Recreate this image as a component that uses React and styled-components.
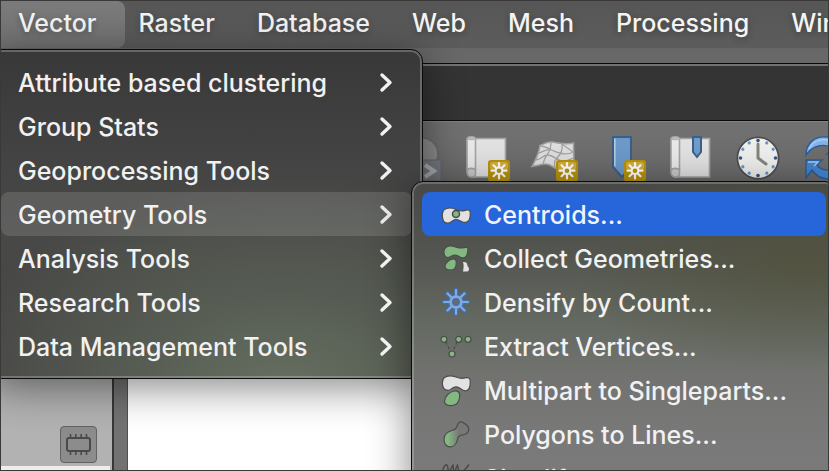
import React from "react";
import styled, { createGlobalStyle, css } from "styled-components";

const GlobalStyle = createGlobalStyle`
  *, *::before, *::after { box-sizing: border-box; }
  body { margin: 0; overflow: hidden; background: #5f5f5f; }
  body, button { font-family: Inter, "Liberation Sans", sans-serif; }
  button { border: 0; margin: 0; padding: 0; background: none; color: inherit; font-size: inherit; text-align: left; }
  ul { list-style: none; margin: 0; padding: 0; }
  svg { display: block; flex: none; overflow: visible; }
`;

const Screen = styled.div`
  position: relative;
  display: flex;
  flex-direction: column;
  height: 100vh;
  overflow: hidden;
  border: 1px solid #3a3838;
  background: linear-gradient(#606060, #696969 64px);
`;

const MenuBar = styled.nav`
  display: flex;
  flex: none;
  height: 47px;
  margin-left: -11px;
  background: linear-gradient(#565656, #5c5c5c);
  color: #f4f4f4;
  font-size: 25px;
`;

const MenuTitle = styled.button`
  flex: none;
  padding: 0 28px 4px;
  margin-right: -14px;
  font-weight: 500;
  white-space: nowrap;
  text-shadow: 0 2px 6px rgba(0, 0, 0, 0.3);
  ${(p) => p.$open && css`
    border-radius: 8px;
    background: linear-gradient(#7b7b7b, #727272);
  `}
`;

const AppWindow = styled.main`
  display: flex;
  flex: 1;
  flex-direction: column;
  margin-top: 15px;
  border-top: 1px solid #090909;
`;

const TitleBar = styled.header`
  height: 57px;
  border-top: 2px solid #737373;
  border-bottom: 1px solid #090909;
  background: #343434;
`;

const ToolBar = styled.div`
  display: flex;
  flex: none;
  gap: 24px;
  padding: 14px 0 20px 397px;
  border-top: 1px solid #828282;
  background: linear-gradient(#717171, #686868);
`;

const ToolButton = styled.button`
  flex: none;
  width: 44px;
  height: 44px;
`;

const Workspace = styled.div`
  display: flex;
  flex: 1;
`;

const SidePanel = styled.aside`
  display: flex;
  flex-direction: column;
  justify-content: flex-end;
  align-items: flex-end;
  width: 111px;
  background: #b2b2b2;
`;

const MemoryButton = styled.button`
  display: grid;
  place-items: center;
  width: 37px;
  height: 37px;
  margin: 0 15px 3px 0;
  border: 1px solid #626262;
  border-radius: 4px;
  background: #8c8c8c;
`;

const ListEdge = styled.div`
  align-self: stretch;
  height: 4px;
  margin-right: 2px;
  background: #eeeeee;
`;

const Splitter = styled.div`
  width: 16px;
  border-left: 2px solid #373737;
  border-right: 1px solid #505050;
  background: #727272;
`;

const Canvas = styled.section`
  flex: 1;
  background: #ffffff;
`;

const menuFrame = css`
  position: absolute;
  padding: 10px;
  border: 1px solid #0b0b0b;
  border-radius: 12px;
  color: #f1f1f1;
  font-size: 25px;
  font-weight: 500;
`;

const Menu = styled.ul`
  && {
    ${menuFrame}
    top: 48px;
    left: -11px;
    width: 433px;
    background:
      radial-gradient(ellipse 340px 220px at 295px 345px, #677061, rgba(92, 100, 88, 0.75) 45%, rgba(75, 75, 73, 0) 100%),
      linear-gradient(#383838, #444444 35%, #484846 60%, #464544);
    box-shadow: inset 0 0 0 2px rgba(255, 255, 255, 0.23), 0 8px 42px rgba(0, 0, 0, 0.48);
  }
`;

const SubMenu = styled.ul`
  && {
    ${menuFrame}
    top: -11px;
    left: calc(100% - 1px);
    width: 426px;
    background:
      radial-gradient(ellipse 240px 110px at 390px 80px, rgba(80, 80, 55, 0.65), rgba(80, 80, 55, 0)),
      linear-gradient(#484846, #535550 70px, #646961 140px, #727370 195px, #797979 260px, #7b7b7b);
    box-shadow: inset 0 0 0 2px rgba(255, 255, 255, 0.2), 0 8px 42px rgba(0, 0, 0, 0.48);
  }
`;

const MenuItem = styled.li`
  position: relative;
`;

const MenuRow = styled.button`
  display: flex;
  align-items: center;
  justify-content: space-between;
  width: 100%;
  height: 44px;
  padding: 0 20px 0 17px;
  border-radius: 8px;
  font-weight: inherit;
  white-space: nowrap;
  ${(p) => p.$open && css`background: rgba(255, 255, 255, 0.13);`}
`;

const ActionRow = styled(MenuRow)`
  justify-content: flex-start;
  gap: 12px;
  padding: 0 18px;
  ${(p) => p.$selected && css`background: #2765da; color: #f0f4ff;`}
`;

const RowLabel = styled.span`
  padding-top: 2px;
`;

const OUTLINE = "#4b4b4b";
const GREEN = "#83b981";

const Chevron = () => (
  <svg width="12" height="18" viewBox="0 0 12 18" fill="none" stroke="#f1f1f1" strokeWidth="3.4" strokeLinecap="round" strokeLinejoin="round">
    <path d="M2 2l8 7.500-8 7.500" />
  </svg>
);

const MenuIcon = ({ children }) => (
  <svg width="32" height="32" viewBox="0 0 32 32" stroke={OUTLINE} strokeWidth="1.2" aria-hidden="true">{children}</svg>
);

const CentroidIcon = () => (
  <MenuIcon>
    <path fill="#e2e2e2" d="M2.300 17C2.300 12.500 5 10 10 10c5 0 7 3 12 3 3 0 4.500-2 7-.8 2 1 1.300 4.500 1 7-.6 4.300-4.200 6.300-8 4.600-2.800-1.300-3.300-2.300-6-2.300-4 0-4.500 3.700-8.500 3.700-3.500 0-5.200-3.200-5.200-8.200z" />
    <circle cx="16" cy="16" r="3.500" fill={GREEN} strokeWidth="1.500" />
  </MenuIcon>
);

const CollectIcon = () => (
  <MenuIcon>
    <path fill={GREEN} d="M4 11c-.5-4 2-7 6-7 5 0 7 2 11 2 3 0 4-1 6-.5 2 .8.5 4 .3 6-.3 3.500-3.300 5-6.300 4-3-1.300-3-2.500-6-2.500-3.500 0-4 2.500-7 2.500-2.500 0-3.700-2-4-4.500z" />
    <path fill={GREEN} d="M5 24c.5-3 4-6.500 8-7 2.500-.3 3.300 1.500 3.300 3.500 0 4-1.300 7.500-5.300 7.500S4.600 26.500 5 24z" />
    <path fill="#e2e2e2" stroke="none" d="M23 20c3-.3 4 .5 4.300 3 .3 2 1.700 2 1.700 4s-1 2.500-3 2.500h-3c.5-3 1.200-6 0-9.500z" />
  </MenuIcon>
);

const DensifyIcon = () => {
  const spokes = [0, 45, 90, 135, 180, 225, 270, 315];
  return (
    <MenuIcon>
      <g stroke="#3c70b5" strokeWidth="4.600" strokeLinecap="round">
        {spokes.map((a) => <path key={a} d="M16 9V4" transform={`rotate(${a} 16 16)`} />)}
      </g>
      <circle cx="16" cy="16" r="7.800" fill="#3c70b5" stroke="none" />
      <g stroke="#83a9d8" strokeWidth="2.200" strokeLinecap="round">
        {spokes.map((a) => <path key={a} d="M16 9V4" transform={`rotate(${a} 16 16)`} />)}
      </g>
      <circle cx="16" cy="16" r="5" fill="#646961" stroke="#83a9d8" strokeWidth="3.600" />
      <circle cx="16" cy="16" r="3.300" fill="#666b65" stroke="#3c70b5" strokeWidth="1.300" />
    </MenuIcon>
  );
};

const VerticesIcon = () => (
  <MenuIcon>
    <path fill="none" strokeDasharray="3 2" d="M5.500 12l5 9M17 12l-4 9" />
    {[[4, 9.3], [18.7, 9.3], [28, 9.3], [12, 24]].map(([x, y]) => (
      <circle key={x} cx={x} cy={y} r="3" fill={GREEN} />
    ))}
  </MenuIcon>
);

const MultipartIcon = () => (
  <MenuIcon>
    <path fill="#e2e2e2" d="M2.300 9.500C2 4.500 5 1.800 10 1.800c5 0 7 2.500 12 2.500 3 0 4-1 6.500-.5 2.500.8 1.800 5 1.500 8-.6 4.200-4 6-7 4.500-3-1.300-3.500-3.500-7-3.500-4 0-4.500 3.500-8 3.500-3.500 0-5.400-3-5.700-6.800z" />
    <path fill={GREEN} d="M4.500 27c.5-4 4.500-9.500 10-10 4-.3 5.500 2 5.300 5-.4 5.500-3.300 9.600-9 9.600-3.600 0-6.700-1.600-6.300-4.600z" />
  </MenuIcon>
);

const PolyLinesIcon = () => (
  <MenuIcon>
    <defs>
      <linearGradient id="polyFade">
        <stop offset="0.150" stopColor={GREEN} />
        <stop offset="0.600" stopColor={GREEN} stopOpacity="0" />
      </linearGradient>
    </defs>
    <path fill="url(#polyFade)" d="M4 21c.5-5 4-7.500 8-8.500 4-1 4.500-2.500 5.500-5.500C18.500 4 21 3 23 4.500c1.500 1.500 5.500 2.500 5.800 6 .2 4-2.800 6-6.300 6.500-4 .5-4.500 2-5 4.500-1 5-4.500 7.500-8 7.300-3.500-.3-5.700-3.800-5.500-7.800z" />
  </MenuIcon>
);

const SimplifyIcon = () => (
  <MenuIcon>
    <path fill="none" strokeWidth="1.500" d="M2.500 10c.5-5 3-8 4.500-7 1.500 1.500.5 6 2 6s3-5 4-6c.5 2-.2 6 1.500 6 1.500-1 2-5 3-6 1 2 .5 7 2.500 7 3 0 6-3 9-7.500" />
  </MenuIcon>
);

const ToolSvg = ({ children }) => (
  <svg width="44" height="44" viewBox="0 0 44 44" aria-hidden="true">{children}</svg>
);

const NewBadge = () => (
  <g>
    <rect x="22" y="24" width="22" height="21.500" rx="3" fill="#b8940b" />
    <rect x="24" y="26" width="18" height="8" rx="2" fill="#d0ae3d" />
    <path stroke="#fff" strokeWidth="2.200" strokeLinecap="round" d="M33 27v15.500M25.500 34.700h15M27.500 29.200l11 11M38.500 29.200l-11 11" />
    <circle cx="33" cy="34.700" r="4.400" fill="#fff" />
    <circle cx="33" cy="34.700" r="2.300" fill="#b8940b" />
  </g>
);

const Scroll = () => (
  <g stroke="#a3a3a3" strokeWidth="1.600">
    <path fill="#e1e1e1" d="M7 2.500h32.500v38.500H7z" />
    <path fill="#e8e8e8" d="M1 36V3c0-3 8.500-3 8.500 0v31" />
    <path fill="#c9c9c9" d="M1 36c0-4 4-4.500 8.500-2.500V38c0 4.500-8.500 4.500-8.500-2z" />
    <path fill="#bdbdbd" d="M1 2.500c2-2.500 7-2.500 8.500 0l-2 1.200H3z" strokeWidth="0.800" />
  </g>
);

const LayerToolIcon = () => (
  <ToolSvg>
    <circle cx="24" cy="18" r="16" fill="#8b8b8b" stroke="#696969" strokeWidth="1.600" />
    <rect x="21" y="24" width="22" height="21" rx="1" fill="#777b80" stroke="#64686d" />
    <path fill="none" stroke="#b4b4b4" strokeWidth="4" d="M27 29l9 6-9 6" />
  </ToolSvg>
);

const NewMapIcon = () => <ToolSvg><Scroll /><NewBadge /></ToolSvg>;

const NewMeshIcon = () => (
  <ToolSvg>
    <g stroke="#a2a2a2" strokeWidth="1.300">
      <path fill="#dedede" strokeWidth="1.600" d="M6 9.500C10 8 13 5.500 18 6c7 1 14 3 21.500 1l.500 23c-6 1-9 5-15 3.500-7-2-9-6-14-5.500-5 .3-8 2-13 2.500C1 25 5 18 6 9.500z" />
      <path fill="none" d="M17 6c0 6-1 9-4 13s-3 6-4 9M28 8c1 6-1 10-5 14-3 3-3 6-2 9M4.500 17c5-1 8-5 13-3 8 3 14 6 22 2M1.500 24c5 0 8-5 12-5 6 0 10 6 16 6 4 0 7-2 10-3M6 10c4 0 8 2 11.500 4M28 8l11 8M23 22l8 10" />
    </g>
    <NewBadge />
  </ToolSvg>
);

const BookmarkShape = () => (
  <>
    <path fill="#6b99c9" stroke="#3d5e85" strokeWidth="2" d="M11 1h18v30l-9 10-9-10z" />
    <path fill="none" stroke="#b3cbe4" strokeWidth="1.600" d="M12.800 2.500v28" />
  </>
);

const NewBookmarkIcon = () => <ToolSvg><BookmarkShape /><NewBadge /></ToolSvg>;

const ShowBookmarksIcon = () => (
  <ToolSvg>
    <Scroll />
    <path fill="#6e9bcb" stroke="#3d5e85" strokeWidth="2" d="M23 1h8v15l-4 5-4-5z" />
  </ToolSvg>
);

const ClockIcon = () => (
  <ToolSvg>
    <circle cx="20" cy="22" r="20.600" fill="#eeeeec" stroke="#4c4c4c" strokeWidth="1.700" />
    {Array.from({ length: 12 }, (_, i) => (
      <circle key={i} cx="20" cy="4.500" r={i % 3 ? 1.6 : 1.8} fill={i % 3 ? "#6594cb" : "#34557d"} transform={`rotate(${i * 30} 20 22)`} />
    ))}
    <path fill="none" stroke="#85857f" strokeWidth="3" strokeLinejoin="round" strokeLinecap="round" d="M20 8v14l8 6" />
  </ToolSvg>
);

const RefreshIcon = () => (
  <ToolSvg>
    <g stroke="#2c5b97" strokeWidth="1.400">
      <path fill="#82b3e8" d="M0 19C0 7 9 0 20 1c5 0 9 2 12 5l4-4v16H21l5-6c-8-5-19-3-26 7z" />
      <path fill="#4383ce" d="M0 24h16l-5 5c4 6 14 7 21 1l6 6c-9 10-25 9-32-2l-6 8z" />
      <path fill="none" stroke="#a5caef" d="M2 26h10l-4 4M3 13C8 3 18 2 26 6" />
    </g>
  </ToolSvg>
);

const titles = ["Vector", "Raster", "Database", "Web", "Mesh", "Processing", "Window"];

const vectorItems = [
  "Attribute based clustering",
  "Group Stats",
  "Geoprocessing Tools",
  "Geometry Tools",
  "Analysis Tools",
  "Research Tools",
  "Data Management Tools",
];

const geometryItems = [
  ["Centroids...", CentroidIcon],
  ["Collect Geometries...", CollectIcon],
  ["Densify by Count...", DensifyIcon],
  ["Extract Vertices...", VerticesIcon],
  ["Multipart to Singleparts...", MultipartIcon],
  ["Polygons to Lines...", PolyLinesIcon],
  ["Simplify...", SimplifyIcon],
];

const tools = [
  ["Open layer", LayerToolIcon],
  ["New map view", NewMapIcon],
  ["New mesh", NewMeshIcon],
  ["New bookmark", NewBookmarkIcon],
  ["Show bookmarks", ShowBookmarksIcon],
  ["Temporal controller", ClockIcon],
  ["Refresh", RefreshIcon],
];

const GeometryMenu = () => (
  <SubMenu aria-label="Geometry Tools">
    {geometryItems.map(([label, Icon], i) => (
      <MenuItem key={label}>
        <ActionRow $selected={i === 0}><Icon /><RowLabel>{label}</RowLabel></ActionRow>
      </MenuItem>
    ))}
  </SubMenu>
);

export default function App() {
  const openItem = "Geometry Tools";
  return (
    <>
      <GlobalStyle />
      <Screen>
        <MenuBar>
          {titles.map((t) => <MenuTitle key={t} $open={t === "Vector"}>{t}</MenuTitle>)}
        </MenuBar>
        <AppWindow>
          <TitleBar />
          <ToolBar>
            {tools.map(([label, Icon]) => (
              <ToolButton key={label} aria-label={label}><Icon /></ToolButton>
            ))}
          </ToolBar>
          <Workspace>
            <SidePanel>
              <MemoryButton aria-label="Memory layer">
                <svg width="25" height="23" viewBox="0 0 25 23" fill="none" stroke="#4a4a4a" strokeWidth="2">
                  <rect x="1" y="5" width="23" height="13" rx="2" />
                  <path strokeWidth="1.600" d="M4.500 5V1M9.800 5V1M15.200 5V1M20.500 5V1M4.500 18v4M9.800 18v4M15.200 18v4M20.500 18v4" />
                </svg>
              </MemoryButton>
              <ListEdge />
            </SidePanel>
            <Splitter />
            <Canvas />
          </Workspace>
        </AppWindow>
        <Menu aria-label="Vector">
          {vectorItems.map((label) => (
            <MenuItem key={label}>
              <MenuRow $open={label === openItem} aria-haspopup="menu"><RowLabel>{label}</RowLabel><Chevron /></MenuRow>
              {label === openItem && <GeometryMenu />}
            </MenuItem>
          ))}
        </Menu>
      </Screen>
    </>
  );
}
